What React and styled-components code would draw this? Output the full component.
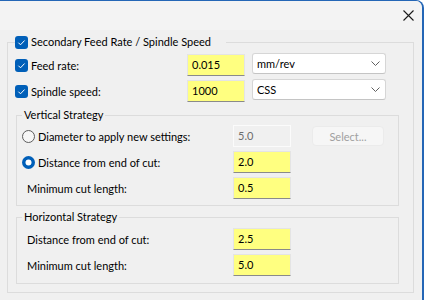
import React from 'react';
import styled, { createGlobalStyle } from 'styled-components';

const GlobalStyle = createGlobalStyle`
  html, body {
    margin: 0;
    padding: 0;
    background: #ffffff;
  }
  body {
    font-family: Lato, "Liberation Sans", Arial, sans-serif;
    font-size: 11px;
    color: #000;
  }
`;

const Window = styled.div`
  width: 424px;
  height: 300px;
  box-sizing: border-box;
  background: #f0f0f0;
  border-top: 1px solid #2466b6;
  border-right: 2px solid #2466b6;
  border-top-right-radius: 8px;
  overflow: hidden;
  display: flex;
  flex-direction: column;
`;

const TitleBar = styled.div`
  height: 29px;
  flex: none;
  background: #f3f3f3;
  display: flex;
  justify-content: flex-end;
  align-items: center;
  padding-right: 8px;
`;

const Body = styled.div`
  flex: 1;
  padding: 4px 0 0 7px;
`;

const Group = styled.fieldset`
  margin: ${({ top }) => top || 0}px 0 0 0;
  width: ${({ width }) => width}px;
  box-sizing: border-box;
  border: 1px solid #dcdcdc;
  padding: 0 ${({ padRight }) => padRight || 0}px ${({ padBottom }) => padBottom}px ${({ padLeft }) => padLeft || 0}px;
  min-inline-size: 0;
`;

const Legend = styled.legend`
  display: flex;
  align-items: center;
  gap: 3px;
  height: 16px;
  margin-left: ${({ offset }) => offset}px;
  padding: 0 ${({ padRight }) => padRight}px 0 ${({ padLeft }) => padLeft || 0}px;
  line-height: 16px;
  color: #000;
`;

const Rows = styled.div`
  display: flex;
  flex-direction: column;
  gap: 4px;
  margin-top: ${({ top }) => top}px;
  margin-left: ${({ shift }) => shift || 0}px;
`;

const Row = styled.div`
  display: grid;
  grid-template-columns: ${({ labelWidth }) => labelWidth}px 58px auto;
  align-items: center;
  height: 22px;
`;

const Label = styled.div`
  display: flex;
  align-items: center;
  gap: ${({ gap }) => (gap != null ? gap : 3)}px;
  padding-left: ${({ indent }) => indent || 0}px;
  white-space: nowrap;
`;

const Field = styled.div`
  height: 22px;
  box-sizing: border-box;
  background: ${({ disabled }) => (disabled ? '#f0f0f0' : '#ffff80')};
  border: 1px solid ${({ disabled }) => (disabled ? '#fbfbfb' : '#e4e4e4')};
  border-bottom: 1px solid ${({ disabled }) => (disabled ? '#fbfbfb' : '#8a8a8a')};
  padding-left: 4px;
  line-height: 19px;
  color: ${({ disabled }) => (disabled ? '#6d6d6d' : '#000')};
`;

const Select = styled.div`
  width: 134px;
  height: 21px;
  margin-left: 7px;
  box-sizing: border-box;
  background: #fff;
  border: 1px solid #d6d6d6;
  border-bottom-color: #c4c4c4;
  border-radius: 3px;
  display: flex;
  align-items: center;
  justify-content: space-between;
  padding: 0 5px 0 4px;
  align-self: start;
  margin-top: -1px;
`;

const Button = styled.div`
  width: 72px;
  height: 20px;
  margin-left: 21px;
  box-sizing: border-box;
  background: #f6f6f6;
  border: 1px solid #ebebeb;
  border-radius: 4px;
  color: #a0a0a0;
  display: flex;
  align-items: center;
  justify-content: center;
`;

const Check = () => (
  <svg width="13" height="13" viewBox="0 0 13 13" style={{ flex: 'none', marginTop: 1 }}>
    <rect x="0" y="0" width="13" height="13" rx="3" fill="#005fb8" />
    <path d="M3.4 6.7 L5.5 8.8 L9.6 4.5" fill="none" stroke="#fff" strokeWidth="1" />
  </svg>
);

const Radio = ({ checked }) => (
  <svg width="13" height="13" viewBox="0 0 13 13" style={{ flex: 'none' }}>
    {checked ? (
      <>
        <circle cx="6.5" cy="6.5" r="6.5" fill="#005fb8" />
        <circle cx="6.5" cy="6.5" r="3" fill="#fff" />
      </>
    ) : (
      <circle cx="6.5" cy="6.5" r="6" fill="#f6f6f6" stroke="#5c5c5c" strokeWidth="1" />
    )}
  </svg>
);

const Chevron = () => (
  <svg width="9" height="5" viewBox="0 0 9 5">
    <path d="M0.5 0.5 L4.5 4.5 L8.5 0.5" fill="none" stroke="#606060" strokeWidth="1" />
  </svg>
);

const Close = () => (
  <svg width="11" height="11" viewBox="0 0 11 11">
    <path d="M0.5 0.5 L10.5 10.5 M10.5 0.5 L0.5 10.5" stroke="#1a1a1a" strokeWidth="1.1" />
  </svg>
);

export default function App() {
  return (
    <>
      <GlobalStyle />
      <Window>
        <TitleBar>
          <Close />
        </TitleBar>
        <Body>
          <Group width={407} padLeft={8} padRight={14} padBottom={8}>
            <Legend offset={-1} padRight={15}>
              <Check />
              Secondary Feed Rate / Spindle Speed
            </Legend>
            <Rows top={4} shift={-1}>
              <Row labelWidth={172}>
                <Label>
                  <Check />
                  Feed rate:
                </Label>
                <Field>0.015</Field>
                <Select>
                  mm/rev
                  <Chevron />
                </Select>
              </Row>
              <Row labelWidth={172}>
                <Label>
                  <Check />
                  Spindle speed:
                </Label>
                <Field>1000</Field>
                <Select>
                  CSS
                  <Chevron />
                </Select>
              </Row>
            </Rows>

            <Group width={383} top={5} padBottom={6}>
              <Legend offset={5} padLeft={2} padRight={2}>
                Vertical Strategy
              </Legend>
              <Rows top={2}>
                <Row labelWidth={216}>
                  <Label indent={5} gap={3}>
                    <Radio />
                    Diameter to apply new settings:
                  </Label>
                  <Field disabled>5.0</Field>
                  <Button>Select...</Button>
                </Row>
                <Row labelWidth={216}>
                  <Label indent={5} gap={3}>
                    <Radio checked />
                    Distance from end of cut:
                  </Label>
                  <Field>2.0</Field>
                </Row>
                <Row labelWidth={216}>
                  <Label indent={10}>Minimum cut length:</Label>
                  <Field>0.5</Field>
                </Row>
              </Rows>
            </Group>

            <Group width={383} top={3} padBottom={7}>
              <Legend offset={5} padLeft={2} padRight={2}>
                Horizontal Strategy
              </Legend>
              <Rows top={3}>
                <Row labelWidth={216}>
                  <Label indent={10}>Distance from end of cut:</Label>
                  <Field>2.5</Field>
                </Row>
                <Row labelWidth={216}>
                  <Label indent={10}>Minimum cut length:</Label>
                  <Field>5.0</Field>
                </Row>
              </Rows>
            </Group>
          </Group>
        </Body>
      </Window>
    </>
  );
}
